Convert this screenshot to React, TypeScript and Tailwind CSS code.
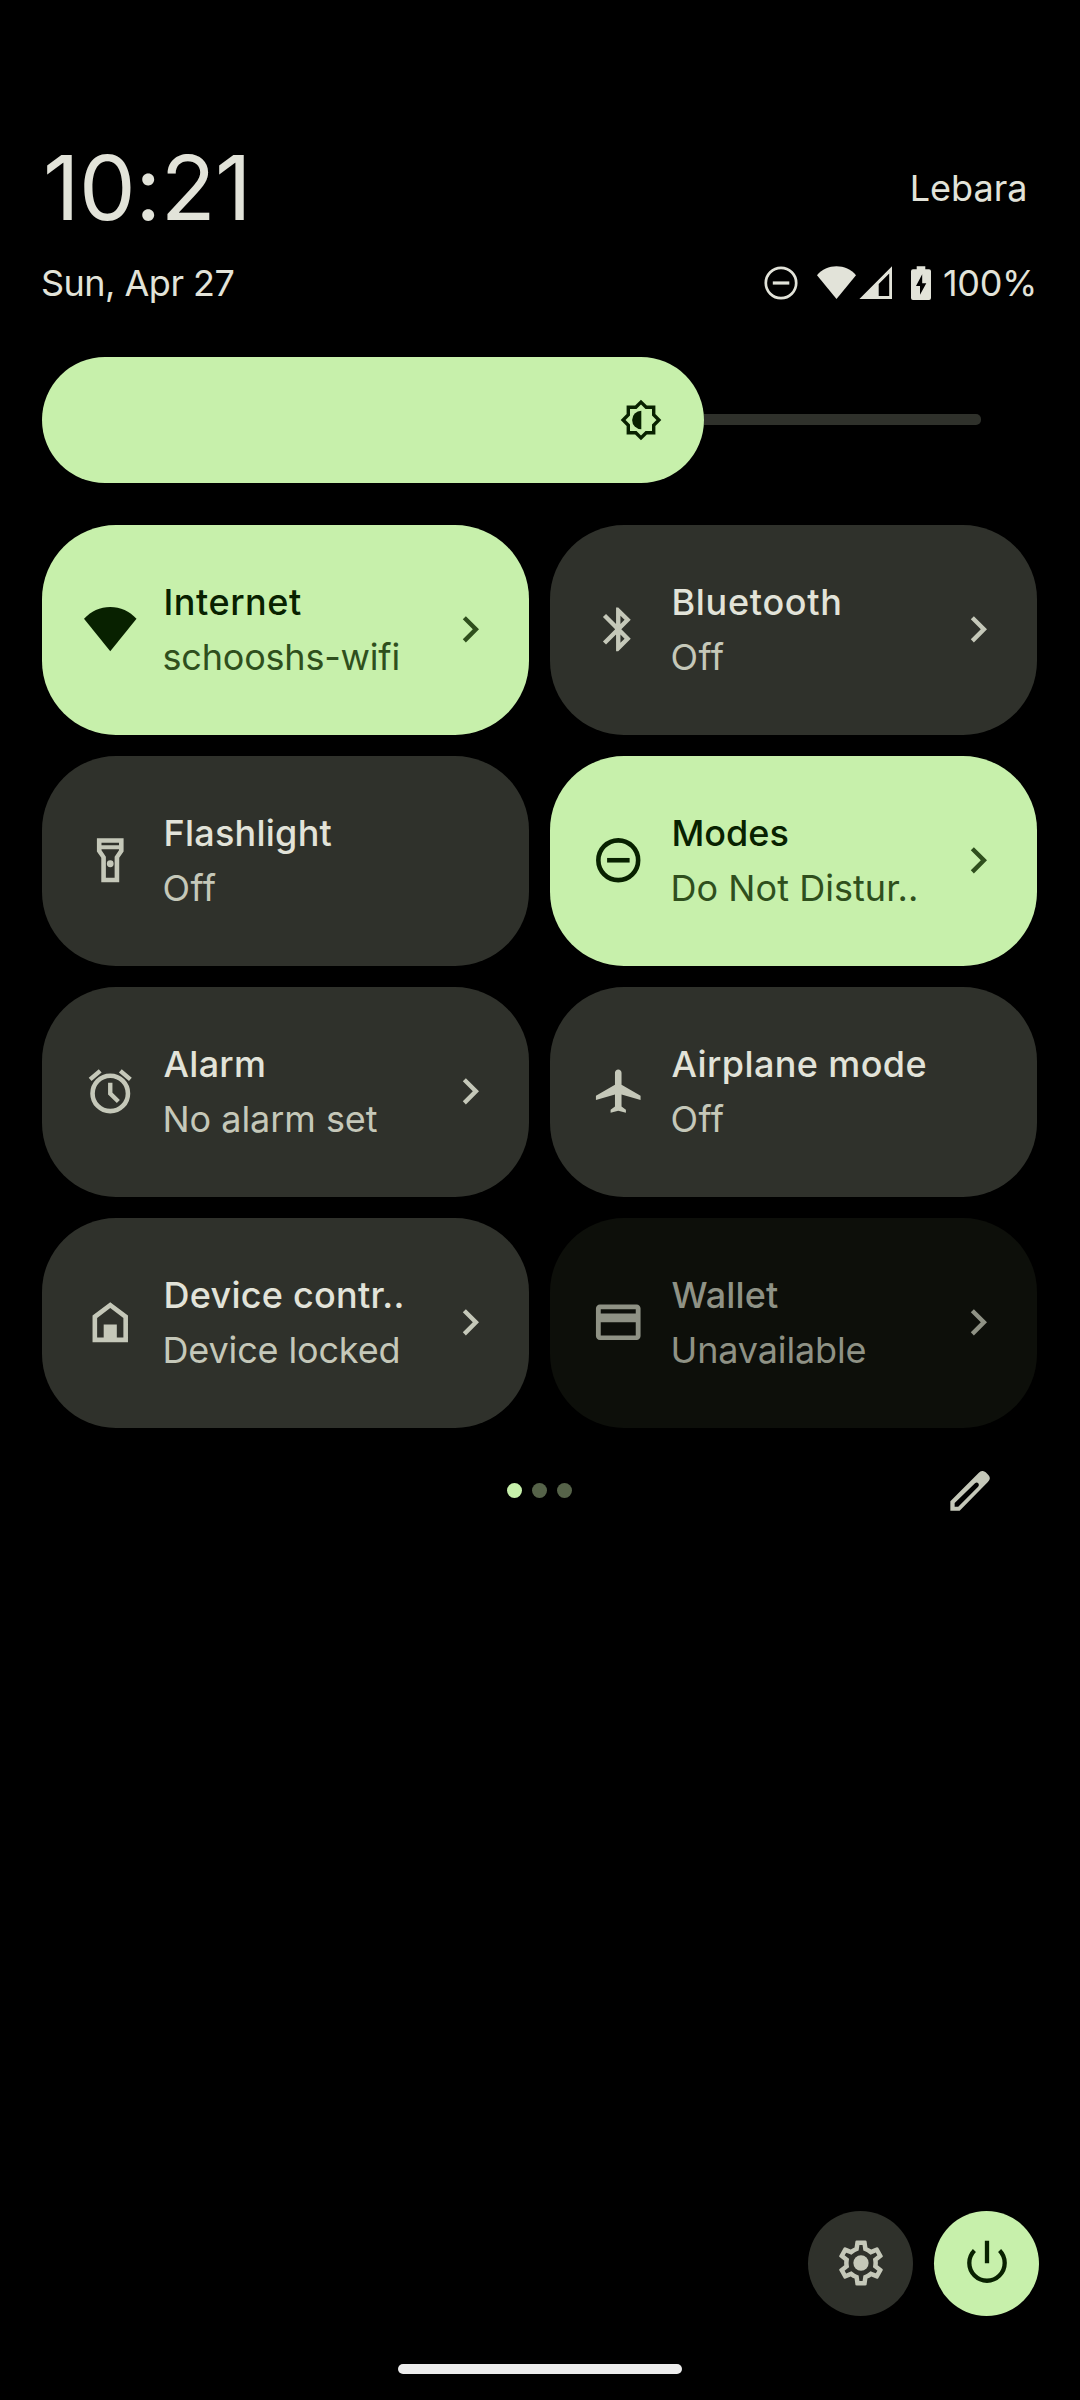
import React from 'react'

type TileData = {
  title: string
  titleSpacing: string
  status: string
  statusSpacing: string
  icon: React.ReactNode
  state?: 'on' | 'off' | 'disabled'
  chevron?: boolean
}

const DoNotDisturbIcon = () => (
  <>
    <circle cx="12" cy="12" r="9.1" fill="none" stroke="currentColor" strokeWidth="2.1" />
    <path d="M6.9 10.95h10.3v2.1H6.9z" />
  </>
)

const WifiIcon = () => <path d="M0 7.2C3.1 3.8 7.4 1.8 12 1.8s8.9 2 12 5.4L12 22z" />

const BluetoothIcon = () => (
  <path d="M17.71 7.71L12 2h-1v7.59L6.41 5 5 6.41 10.59 12 5 17.59 6.41 19 11 14.41V22h1l5.71-5.71-4.3-4.29 4.3-4.29zM13 5.83l1.88 1.88L13 9.59V5.83zm1.88 10.46L13 18.17v-3.76l1.88 1.88z" />
)

const FlashlightIcon = () => (
  <>
    <path
      fillRule="evenodd"
      d="M5.9 1.9V8l2 2.9v11.2h8.2V10.9l2-2.9V1.9H5.9zM16 3.95V5.1H8V3.95h8zM14 10.4V20h-4v-9.6l-2-3V7h8v.4l-2 3z"
    />
    <circle cx="12" cy="13.6" r="1.55" />
  </>
)

const AlarmIcon = () => (
  <>
    <circle cx="12" cy="13" r="8.1" fill="none" stroke="currentColor" strokeWidth="2.1" />
    <path d="M12 8.1v5l3.7 3.6M2.8 6.6l4.6-3.9M21.2 6.6l-4.6-3.9" fill="none" stroke="currentColor" strokeWidth="2" />
  </>
)

const AirplaneIcon = () => (
  <path d="M22.2 16v-2l-8.7-5V3.5c0-.83-.67-1.5-1.5-1.5s-1.5.67-1.5 1.5V9l-8.7 5v2l8.7-2.5V19l-2 1.4v1.4L12 20.9l3.5.9v-1.4l-2-1.4v-5.5z" />
)

const HomeIcon = () => (
  <path fillRule="evenodd" d="M3.9 21.1V8.95L12 2.9l8.1 6.05V21.1zM6 10v9h3v-6h6v6h3v-9l-6-4.5z" />
)

const CardIcon = () => (
  <path
    fillRule="evenodd"
    d="M20.4 3.9H3.6c-1 0-1.8.8-1.8 1.8v12.6c0 1 .8 1.8 1.8 1.8h16.8c1 0 1.8-.8 1.8-1.8V5.7c0-1-.8-1.8-1.8-1.8zM20 18H4v-6h16v6zm0-10H4V6h16v2z"
  />
)

const tiles: TileData[] = [
  { title: 'Internet', titleSpacing: 'tracking-[0.54px]', status: 'schooshs-wifi', statusSpacing: 'tracking-[-0.2px]', icon: <WifiIcon />, state: 'on', chevron: true },
  { title: 'Bluetooth', titleSpacing: 'tracking-[0.7px]', status: 'Off', statusSpacing: 'tracking-[0.4px]', icon: <BluetoothIcon />, chevron: true },
  { title: 'Flashlight', titleSpacing: 'tracking-[0.24px]', status: 'Off', statusSpacing: 'tracking-[0.4px]', icon: <FlashlightIcon /> },
  { title: 'Modes', titleSpacing: 'tracking-[0px]', status: 'Do Not Distur..', statusSpacing: 'tracking-[0.05px]', icon: <DoNotDisturbIcon />, state: 'on', chevron: true },
  { title: 'Alarm', titleSpacing: 'tracking-[0.27px]', status: 'No alarm set', statusSpacing: 'tracking-[-0.04px]', icon: <AlarmIcon />, chevron: true },
  { title: 'Airplane mode', titleSpacing: 'tracking-[0.39px]', status: 'Off', statusSpacing: 'tracking-[0.4px]', icon: <AirplaneIcon /> },
  { title: 'Device contr..', titleSpacing: 'tracking-[0.25px]', status: 'Device locked', statusSpacing: 'tracking-[-0.14px]', icon: <HomeIcon />, chevron: true },
  { title: 'Wallet', titleSpacing: 'tracking-[0.1px]', status: 'Unavailable', statusSpacing: 'tracking-[-0.14px]', icon: <CardIcon />, state: 'disabled', chevron: true },
]

const palette = {
  on: { tile: 'bg-[#c7f0ab]', title: 'text-[#082100]', status: 'text-[#2f4f1d]', icon: 'text-[#082100]' },
  off: { tile: 'bg-[#2f312b]', title: 'text-[#e2e3d9]', status: 'text-[#c5c8b9]', icon: 'text-[#c5c8b9]' },
  disabled: { tile: 'bg-[#0d0f0a]', title: 'text-[#8f9285]', status: 'text-[#8f9285]', icon: 'text-[#8f9285]' },
}

function Tile({ title, titleSpacing, status, statusSpacing, icon, state = 'off', chevron }: TileData) {
  const c = palette[state]
  return (
    <button className={`flex h-[210px] items-center rounded-[74px] pl-[42px] pr-[32.5px] text-left ${c.tile}`}>
      <svg viewBox="0 0 24 24" fill="currentColor" className={`mb-px size-[52.5px] shrink-0 ${c.icon}`}>
        {icon}
      </svg>
      <span className="ml-[26px] flex flex-1 flex-col whitespace-nowrap pb-px text-[36px] leading-[55px]">
        <span className={`ml-px font-medium ${titleSpacing} ${c.title}`}>{title}</span>
        <span className={`${statusSpacing} ${c.status}`}>{status}</span>
      </span>
      {chevron && (
        <svg viewBox="0 0 24 24" fill="currentColor" className={`mb-px size-[52.5px] shrink-0 ${c.status}`}>
          <path d="M10 6L8.59 7.41 13.17 12l-4.58 4.59L10 18l6-6z" />
        </svg>
      )}
    </button>
  )
}

function Header() {
  return (
    <header className="px-[42px] text-[36px] text-[#e2e3d9]">
      <div className="flex h-[108px] items-center justify-between">
        <div className="ml-px text-[90px] leading-[108px] tracking-[-0.55px]">10:21</div>
        <div className="mr-[10.5px] leading-[44px]">Lebara</div>
      </div>
      <div className="mt-[19px] flex h-[44px] items-center justify-between">
        <div className="-ml-px leading-[44px] tracking-[-0.52px]">Sun, Apr 27</div>
        <div className="mr-px flex items-center">
          <svg width="34" height="34" viewBox="0 0 34 34" fill="none" stroke="currentColor">
            <circle cx="17" cy="17" r="15.2" strokeWidth="2.7" />
            <path d="M8.8 17h16.5" strokeWidth="3.2" />
          </svg>
          <svg className="ml-[19px]" width="39" height="34" viewBox="0 0 39 34" fill="currentColor">
            <path d="M0 9.2C5 3.4 12 .3 19.5.3S34 3.4 39 9.2L19.5 33z" />
          </svg>
          <svg className="ml-[3px]" width="34" height="34" viewBox="0 0 34 34" fill="currentColor">
            <path fillRule="evenodd" d="M33 .3V33H.4zM30.2 7.5L19.7 18v12h10.5z" />
          </svg>
          <svg className="ml-[18px]" width="20" height="34" viewBox="0 0 20 34" fill="currentColor">
            <path
              fillRule="evenodd"
              d="M5.7.2h8.6v3.1H18a2 2 0 0 1 2 2V32a2 2 0 0 1-2 2H2a2 2 0 0 1-2-2V5.3a2 2 0 0 1 2-2h3.7zM11.2 8.3L5 20h4v8.8L15.3 17.2h-4.1z"
            />
          </svg>
          <span className="ml-[12px] leading-[44px] tracking-[-0.35px]">100%</span>
        </div>
      </div>
    </header>
  )
}

function BrightnessSlider() {
  return (
    <div className="mx-[42px] flex h-[126px] items-center">
      <div className="flex h-full w-[662px] items-center justify-end rounded-full bg-[#c7f0ab] pr-[42px]">
        <svg width="42" height="42" viewBox="-21 -21 42 42" className="mb-px text-[#082100]">
          <path
            d="M0-17.9L5.2-12.7H12.7V-5.2L17.9 0L12.7 5.2V12.7H5.2L0 17.9L-5.2 12.7H-12.7V5.2L-17.9 0L-12.7-5.2V-12.7H-5.2Z"
            fill="none"
            stroke="currentColor"
            strokeWidth="3.4"
          />
          <path d="M.3-9.2A9.2 9.2 0 0 0 .3 9.2z" fill="currentColor" />
        </svg>
      </div>
      <div className="mb-px h-[11px] w-[277px] rounded-r-[5px] bg-[#2f312b]" />
    </div>
  )
}

export default function App() {
  return (
    <main className="flex h-[2400px] w-[1080px] flex-col bg-black pt-[134px] font-['Inter',sans-serif]">
      <Header />
      <section className="mt-[52px]">
        <BrightnessSlider />
      </section>
      <section className="mx-[42px] mt-[42px] grid grid-cols-[487px_487px] gap-[21px]">
        {tiles.map((t) => (
          <Tile key={t.title} {...t} />
        ))}
      </section>
      <div className="ml-[507px] mt-[42px] flex h-[41px] w-[483px] items-center justify-between">
        <div className="flex gap-[10px]">
          <span className="size-[15px] rounded-full bg-[#c7f0ab]" />
          <span className="size-[15px] rounded-full bg-[#566349]" />
          <span className="size-[15px] rounded-full bg-[#566349]" />
        </div>
        <svg width="40" height="40" viewBox="1316 93 112 120" preserveAspectRatio="none" fill="#c5c8b9">
          <path
            fillRule="evenodd"
            d="M1317 212V184L1396 99Q1406 88 1416 97L1424 106Q1432 116 1422 126L1343 212ZM1329 200H1339L1394 141Q1399 135 1395 130Q1391 125 1386 130L1329 189Z"
          />
        </svg>
      </div>
      <footer className="mt-auto flex flex-col items-center pb-[26px]">
        <div className="mb-[48px] mr-[41px] flex gap-[21px] self-end">
          <button className="flex size-[105px] items-center justify-center rounded-full bg-[#2f312b] text-[#c5c8b9]">
            <svg viewBox="0 0 24 24" fill="currentColor" className="mb-px size-[54px]">
              <path d="M19.43 12.98c.04-.32.07-.64.07-.98 0-.34-.03-.66-.07-.98l2.11-1.65c.19-.15.24-.42.12-.64l-2-3.46c-.09-.16-.26-.25-.44-.25-.06 0-.12.01-.17.03l-2.49 1c-.52-.4-1.08-.73-1.69-.98l-.38-2.65C14.46 2.18 14.25 2 14 2h-4c-.25 0-.46.18-.49.42l-.38 2.65c-.61.25-1.17.59-1.69.98l-2.49-1c-.06-.02-.12-.03-.18-.03-.17 0-.34.09-.43.25l-2 3.46c-.13.22-.07.49.12.64l2.11 1.65c-.04.32-.07.65-.07.98 0 .33.03.66.07.98l-2.11 1.65c-.19.15-.24.42-.12.64l2 3.46c.09.16.26.25.44.25.06 0 .12-.01.17-.03l2.49-1c.52.4 1.08.73 1.69.98l.38 2.65c.03.24.24.42.49.42h4c.25 0 .46-.18.49-.42l.38-2.65c.61-.25 1.17-.59 1.69-.98l2.49 1c.06.02.12.03.18.03.17 0 .34-.09.43-.25l2-3.46c.12-.22.07-.49-.12-.64l-2.11-1.65zm-1.98-1.71c.04.31.05.52.05.73 0 .21-.02.43-.05.73l-.14 1.13.89.7 1.08.84-.7 1.21-1.27-.51-1.04-.42-.9.68c-.43.32-.84.56-1.25.73l-1.06.43-.16 1.13-.2 1.35h-1.4l-.19-1.35-.16-1.13-1.06-.43c-.43-.18-.83-.41-1.23-.71l-.91-.7-1.06.43-1.27.51-.7-1.21 1.08-.84.89-.7-.14-1.13c-.03-.31-.05-.54-.05-.74s.02-.43.05-.73l.14-1.13-.89-.7-1.08-.84.7-1.21 1.27.51 1.04.42.9-.68c.43-.32.84-.56 1.25-.73l1.06-.43.16-1.13.2-1.35h1.39l.19 1.35.16 1.13 1.06.43c.43.18.83.41 1.23.71l.91.7 1.06-.43 1.27-.51.7 1.21-1.07.85-.89.7.14 1.13z" />
              <circle cx="12" cy="12" r="3.4" />
            </svg>
          </button>
          <button className="flex size-[105px] items-center justify-center rounded-full bg-[#c7f0ab] text-[#082100]">
            <svg viewBox="-24 -24 48 48" fill="none" stroke="currentColor" strokeWidth="4.3" className="mb-px size-[48px]">
              <path d="M-12.6-12.4A17.7 17.7 0 1 0 12.6-12.4M0-22.3V.3" />
            </svg>
          </button>
        </div>
        <div className="h-[10px] w-[284px] rounded-full bg-[#ececec]" />
      </footer>
    </main>
  )
}
